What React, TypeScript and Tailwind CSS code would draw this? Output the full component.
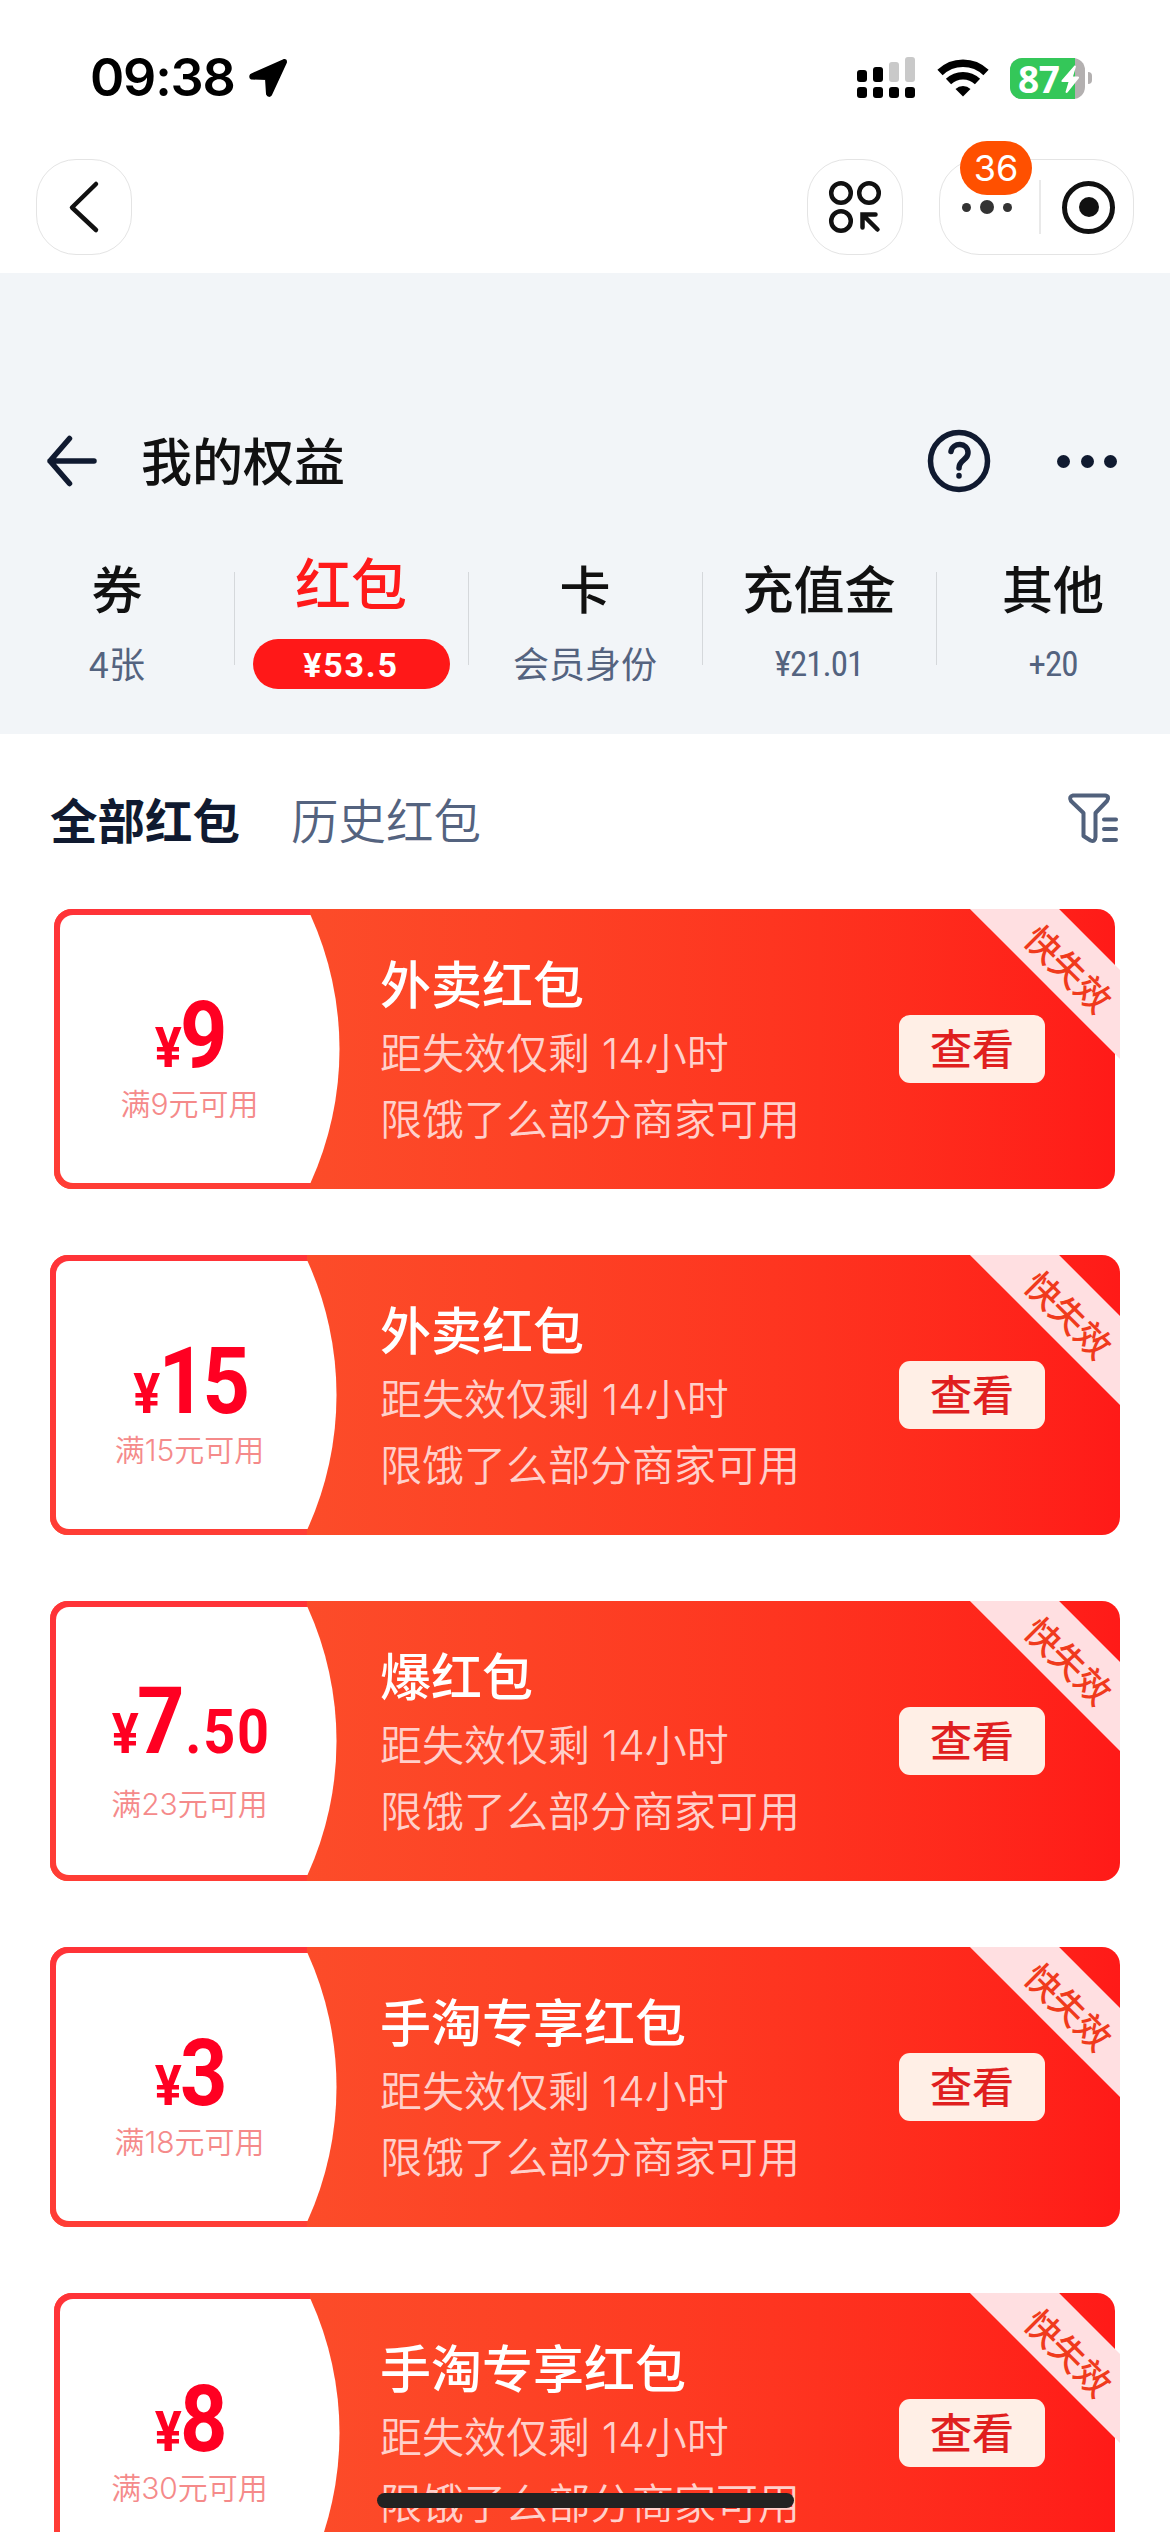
const tabs = [
    { name: "券", value: "4张" },
    { name: "红包", value: "¥53.5", active: true },
    { name: "卡", value: "会员身份" },
    { name: "充值金", value: "¥21.01", narrow: true },
    { name: "其他", value: "+20", narrow: true },
]

const packets = [
    { title: "外卖红包", amount: "9", cents: "", limit: "满9元可用", inset: true },
    { title: "外卖红包", amount: "15", cents: "", limit: "满15元可用" },
    { title: "爆红包", amount: "7", cents: ".50", limit: "满23元可用" },
    { title: "手淘专享红包", amount: "3", cents: "", limit: "满18元可用" },
    { title: "手淘专享红包", amount: "8", cents: "", limit: "满30元可用", inset: true },
]

function StatusBar ()
{
    return (
        <div className="flex flex-row items-center h-[156px] pl-[90px] pr-[78px]">
            <div className="font-['Inter',sans-serif] font-semibold text-[52px] leading-[60px] tracking-[-1.2px] text-black w-[145px] whitespace-nowrap">09:38</div>
            <svg className="ml-[12px]" width="42" height="42" viewBox="0 0 42 42">
                <path d="M37 3.500 L4.500 18 Q3 20 4.500 21 L19.500 21.500 L20.500 37 Q22 39.500 23.500 37.500 L38.500 5 Q38.500 3 37 3.500Z" fill="#000" stroke="#000" strokeWidth="3" strokeLinejoin="round" />
            </svg>

            {/* Signal, wifi and battery */}
            <div className="flex flex-row items-center ml-auto">
                <svg width="58" height="42" viewBox="0 0 58 42">
                    <rect x="0" y="13" width="10" height="12" rx="3" />
                    <rect x="16" y="10" width="10" height="15" rx="3" />
                    <rect x="32" y="5" width="10" height="20" rx="3" fill="#c9c9c9" />
                    <rect x="48" y="0" width="10" height="25" rx="3" fill="#c9c9c9" />
                    <rect x="0" y="30" width="10" height="11" rx="3" />
                    <rect x="16" y="30" width="10" height="11" rx="3" />
                    <rect x="32" y="30" width="10" height="11" rx="3" />
                    <rect x="48" y="30" width="10" height="11" rx="3" />
                </svg>
                <svg className="ml-[22px]" width="52" height="38" viewBox="0 0 52 38">
                    <path d="M3 13.500 A33 33 0 0 1 49 13.500" fill="none" stroke="#000" strokeWidth="7.500" />
                    <path d="M11.500 22.500 A21 21 0 0 1 40.500 22.500" fill="none" stroke="#000" strokeWidth="7.500" />
                    <path d="M18.500 30 A11 11 0 0 1 33.500 30 L26 37.500Z" />
                </svg>
                <div className="relative ml-[21px] w-[75px] h-[41px] rounded-[12px] bg-[#b3b0b0] flex items-center">
                    <div className="absolute left-0 top-0 w-[65px] h-full rounded-l-[12px] bg-[#34c759]"></div>
                    <span className="relative pl-[8px] font-['Open_Sans',sans-serif] font-bold text-[37px] leading-[41px] tracking-[-0.5px] text-white">87</span>
                    <svg className="absolute left-[51px] top-[7px]" width="19" height="29" viewBox="0 0 19 29">
                        <path d="M13.500 0.500 L0.500 15.500 Q0 17 1.500 17 L7.500 17 L4.500 27 Q5 28.500 6.500 27.500 L18 13 Q18.500 11.500 17 11.500 L12 11.500 L15 1.500 Q14.500 0 13.500 0.500Z" fill="#fff" />
                    </svg>
                </div>
                <div className="ml-[3px] w-[4px] h-[12px] rounded-r-full bg-[#b3b0b0]"></div>
            </div>
        </div>
    )
}

function MiniAppBar ()
{
    return (
        <div className="flex flex-row h-[117px] pt-[3px] px-[36px]">
            <div className="w-[96px] h-[96px] rounded-[40px] border border-[#e4e4e4] flex items-center justify-center">
                <svg width="34" height="54" viewBox="0 0 34 54">
                    <path d="M29 4 L5 27.500 L29 50" fill="none" stroke="#111" strokeWidth="4.500" strokeLinecap="round" strokeLinejoin="round" />
                </svg>
            </div>

            <div className="ml-auto w-[96px] h-[96px] rounded-[40px] border border-[#e4e4e4] flex items-center justify-center">
                <svg width="54" height="54" viewBox="0 0 54 54" fill="none" stroke="#111" strokeWidth="4.500">
                    <circle cx="13" cy="13" r="9.800" />
                    <circle cx="41" cy="13" r="9.800" />
                    <circle cx="13" cy="41" r="9.800" />
                    <path d="M34.500 47.500 V34.500 H47.500 M35 35 L49.500 49.500" strokeLinecap="round" />
                </svg>
            </div>

            <div className="relative ml-[36px] w-[195px] h-[96px] rounded-[40px] border border-[#e4e4e4] flex items-center">
                <div className="flex items-center gap-[9px] pl-[22px] w-[99px]">
                    <span className="w-[9px] h-[9px] rounded-full bg-[#333]"></span>
                    <span className="w-[14px] h-[14px] rounded-full bg-[#333]"></span>
                    <span className="w-[9px] h-[9px] rounded-full bg-[#333]"></span>
                </div>
                <div className="w-[2px] h-[54px] bg-[#e9e9e9]"></div>
                <div className="ml-[21px] w-[53px] h-[53px] rounded-full border-[5px] border-[#111] flex items-center justify-center">
                    <span className="w-[20px] h-[20px] rounded-full bg-[#111]"></span>
                </div>
                {/* Unread badge */}
                <div className="absolute left-[20px] top-[-19px] w-[72px] h-[54px] rounded-full bg-[#ff5000] text-white font-['Inter',sans-serif] text-[36px] leading-[54px] text-center">36</div>
            </div>
        </div>
    )
}

function Header ()
{
    return (
        <div className="bg-[#f2f5f8] h-[461px]">
            <div className="flex flex-row items-center pt-[155px] h-[221px] pl-[44px] pr-[53px]">
                <svg width="56" height="56" viewBox="0 0 56 56" fill="none" stroke="#101a30" strokeWidth="5.500" strokeLinecap="round" strokeLinejoin="round">
                    <path d="M25.500 5.500 L6 28 L25.500 50.500 M6 28 H50" />
                </svg>
                <div className="ml-[41px] pb-[4px] text-[51px] leading-[60px] font-medium text-[#111]">我的权益</div>
                <svg className="ml-auto" width="64" height="64" viewBox="0 0 64 64" fill="none" stroke="#101a30" strokeWidth="5.500" strokeLinecap="round">
                    <circle cx="32" cy="32" r="28.500" />
                    <path d="M24 22.500 C25.500 13 41 13 41 24 C41 31 32 31 32 39" />
                    <path d="M32 46.500 V47" />
                </svg>
                <div className="flex flex-row gap-[10.500px] ml-[66px] pt-[1px]">
                    <span className="w-[13px] h-[13px] rounded-full bg-[#101a30]"></span>
                    <span className="w-[13px] h-[13px] rounded-full bg-[#101a30]"></span>
                    <span className="w-[13px] h-[13px] rounded-full bg-[#101a30]"></span>
                </div>
            </div>

            {/* Tabs */}
            <div className="grid grid-cols-5 pt-[53px] h-[240px]">
                {tabs.map((tab, i) => (
                    <div key={i} className="relative flex flex-col items-center">
                        {tab.active
                            ? <div className="text-[56px] leading-[68px] h-[92px] font-medium text-[#ff1a1a]">{tab.name}</div>
                            : <div className="text-[51px] leading-[80px] h-[92px] font-medium text-[#111]">{tab.name}</div>}
                        {tab.active
                            ? <div className="w-[197px] h-[50px] rounded-full bg-[#ff1818] text-white font-['Roboto',sans-serif] font-bold text-[34px] leading-[52px] tracking-[1.800px] text-center">{tab.value}</div>
                            : tab.narrow
                                ? <div className="font-['Roboto_Condensed','Roboto',sans-serif] text-[35px] leading-[52px] tracking-[-1px] text-[#54637f]">{tab.value}</div>
                                : <div className="text-[36px] leading-[46px] text-[#54637f]">{tab.value}</div>}
                        {i > 0 && <div className="absolute left-0 top-[25px] w-px h-[93px] bg-[#d5d8db]"></div>}
                    </div>
                ))}
            </div>
        </div>
    )
}

function FilterRow ()
{
    return (
        <div className="flex flex-row items-center h-[175px] pb-[5px] pl-[50px] pr-[51px] text-[47.500px] leading-[60px]">
            <div className="font-bold text-[#101a30]">全部红包</div>
            <div className="ml-[51px] font-[350] text-[#54637f]">历史红包</div>
            <svg className="ml-auto mb-[1px]" width="52" height="52" viewBox="0 0 52 52" fill="none" stroke="#51617c" strokeWidth="4" strokeLinecap="round" strokeLinejoin="round">
                <path d="M6 2.500 H38 Q43 3 40 8 L28.500 20 V44 Q28 49.500 23.500 47.500 L16.500 43 V20 L4 8 Q1.500 3.500 6 2.500Z" />
                <path d="M37 26.500 H49 M37 36 H49 M37 47 H49" />
            </svg>
        </div>
    )
}

function PacketCard ({ title, amount, cents, limit, inset }: { title: string, amount: string, cents: string, limit: string, inset?: boolean })
{
    return (
        <div className="relative flex flex-row h-[280px] shrink-0">
            {/* Ticket background */}
            <div className={inset
                ? "absolute inset-y-0 left-[4px] right-[5px] rounded-[18px] overflow-hidden bg-gradient-to-r from-[#fb562e] to-[#ff1a18]"
                : "absolute inset-0 rounded-[18px] overflow-hidden bg-gradient-to-r from-[#fb562e] to-[#ff1a18]"}>
                <div className={inset
                    ? "relative w-[256px] h-full bg-gradient-to-b from-[#ff3338] to-[#ff3d35] py-[6px] pl-[6px]"
                    : "relative w-[257px] h-full bg-gradient-to-b from-[#ff3338] to-[#ff3d35] py-[6px] pl-[6px]"}>
                    <div className="bg-white w-full h-full rounded-l-[13px]"></div>
                    <svg className="absolute left-full top-[6px] -ml-px" width="32" height="268" viewBox="0 0 32 268">
                        <path d="M0 0 H1.500 A324 324 0 0 1 1.500 268 H0Z" fill="#fff" />
                    </svg>
                </div>
            </div>

            {/* Amount */}
            <div className="relative w-[279px] flex flex-col items-center text-center">
                <div className={cents
                    ? "h-[179px] pt-[75px] flex items-baseline font-['Roboto',sans-serif] font-bold text-[#ff0022] leading-none scale-x-[0.9]"
                    : "h-[171px] pt-[81px] flex items-baseline font-['Roboto',sans-serif] font-bold text-[#ff0022] leading-none scale-x-[0.9]"}>
                    <span className="text-[56px] tracking-[-2px]">¥</span>
                    <span className="text-[92px] tracking-[-4px]">{amount}</span>
                    {cents && <span className="text-[62px] tracking-[2px] ml-[5px] mr-[-4px]">{cents}</span>}
                </div>
                <div className="font-['Inter','Noto_Sans_CJK_SC',sans-serif] text-[30px] leading-[48px] font-[350] text-[#f58a8a] whitespace-nowrap">{limit}</div>
            </div>

            {/* Description */}
            <div className="relative pl-[51px] pt-[43px] w-[518px] whitespace-nowrap">
                <div className="text-[51px] leading-[60px] font-medium text-white">{title}</div>
                <div className="font-['Inter','Noto_Sans_CJK_SC',sans-serif] mt-[9px] text-[42px] leading-[66px] font-[350] text-[#ffd0cb]">距失效仅剩 14小时</div>
                <div className="font-['Inter','Noto_Sans_CJK_SC',sans-serif] text-[42px] leading-[66px] font-[350] text-[#ffd0cb]">限饿了么部分商家可用</div>
            </div>

            <button className="relative ml-[52px] mt-[106px] w-[146px] h-[68px] rounded-[11px] bg-[#ffefe6] text-[#e01f1f] text-[42px] leading-[64px] pb-[4px] font-medium">查看</button>

            {/* Corner ribbon */}
            <div className="absolute right-0 top-0 w-[160px] h-[160px] overflow-hidden">
                <div className="absolute left-[-42px] top-[22px] w-[300px] h-[63px] rotate-45 bg-[#ffdfe1] text-[#f03a1c] text-[35px] leading-[67px] pl-[10px] text-center font-medium">快失效</div>
            </div>
        </div>
    )
}

export default function App ()
{
    return (
        <div className="relative w-[1170px] h-[2532px] overflow-hidden bg-white font-['Noto_Sans_CJK_SC',sans-serif]">
            <StatusBar />
            <MiniAppBar />
            <Header />
            <FilterRow />
            <div className="flex flex-col gap-[66px] px-[50px]">
                {packets.map((packet, i) => <PacketCard key={i} {...packet} />)}
            </div>
            {/* Home indicator */}
            <div className="absolute left-[377px] top-[2493px] w-[417px] h-[15px] rounded-full bg-[#222]"></div>
        </div>
    )
}
